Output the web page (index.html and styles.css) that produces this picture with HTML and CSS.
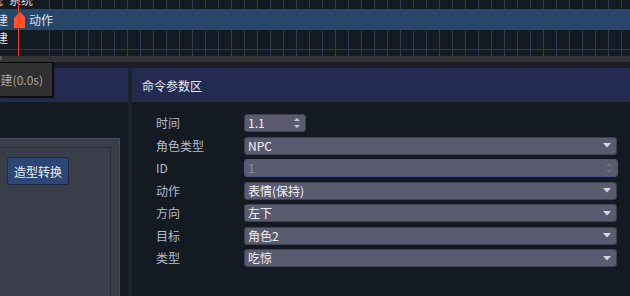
FILE: index.html
```html
<!DOCTYPE html>
<html lang="zh">
<head>
<meta charset="utf-8">
<title>命令参数区</title>
<link rel="stylesheet" href="styles.css">
</head>
<body>
<div class="app">
  <div class="timeline">
    <div class="tl-rows">
      <div class="tl-row r1"><span class="tl-label w3">系统</span><span class="tl-text t1">系统</span></div>
      <div class="tl-row r2 active"><span class="tl-label">创建</span><svg class="marker" width="12" height="16" viewBox="0 0 12 16"><polygon points="0,6 6,0 11,5 11,16 0,16" fill="#ff5526"/></svg><span class="tl-text t2">动作</span></div>
      <div class="tl-row r3"><span class="tl-label">创建</span></div>
      <div class="tl-row r4"></div>
    </div>
    <div class="playhead"></div>
  </div>
  <div class="hscroll"><div class="thumb"></div></div>
  <div class="sep"></div>
  <div class="panels">
    <div class="panel left">
      <div class="panel-header"></div>
      <div class="panel-body">
        <div class="group">
          <div class="group-inner">
            <button class="btn">造型转换</button>
          </div>
        </div>
      </div>
    </div>
    <div class="splitter"></div>
    <div class="panel right">
      <div class="panel-header">命令参数区</div>
      <div class="form">
        <div class="label">时间</div>
        <div class="cell"><div class="field spin"><span class="val">1.1</span><svg class="spin-arrows" width="6" height="10" viewBox="0 0 6 10"><polygon points="0,3 6,3 3,0" /><polygon points="0,7 6,7 3,10" /></svg></div></div>

        <div class="label">角色类型</div>
        <div class="cell"><div class="field combo"><span class="val">NPC</span><svg class="drop" width="8" height="5" viewBox="0 0 8 5"><polygon points="0,0 8,0 4,4.5"/></svg></div></div>

        <div class="label">ID</div>
        <div class="cell"><div class="field combo disabled"><span class="val">1</span><svg class="spin-arrows dim" width="6" height="10" viewBox="0 0 6 10"><polygon points="0,3 6,3 3,0" /><polygon points="0,7 6,7 3,10" /></svg></div></div>

        <div class="label">动作</div>
        <div class="cell"><div class="field combo"><span class="val">表情(保持)</span><svg class="drop" width="8" height="5" viewBox="0 0 8 5"><polygon points="0,0 8,0 4,4.5"/></svg></div></div>

        <div class="label">方向</div>
        <div class="cell"><div class="field combo"><span class="val">左下</span><svg class="drop" width="8" height="5" viewBox="0 0 8 5"><polygon points="0,0 8,0 4,4.5"/></svg></div></div>

        <div class="label">目标</div>
        <div class="cell"><div class="field combo"><span class="val">角色2</span><svg class="drop" width="8" height="5" viewBox="0 0 8 5"><polygon points="0,0 8,0 4,4.5"/></svg></div></div>

        <div class="label">类型</div>
        <div class="cell"><div class="field combo"><span class="val">吃惊</span><svg class="drop" width="8" height="5" viewBox="0 0 8 5"><polygon points="0,0 8,0 4,4.5"/></svg></div></div>
      </div>
    </div>
  </div>
  <div class="tooltip">创建(0.0s)</div>
</div>
</body>
</html>
```
FILE: styles.css
```css
html, body {
  margin: 0;
  padding: 0;
}
body {
  width: 630px;
  height: 296px;
  overflow: hidden;
  background: #141a21;
  font-family: "Noto Sans CJK SC", "Noto Sans", sans-serif;
}
.app {
  position: relative;
  width: 630px;
  height: 296px;
  display: flex;
  flex-direction: column;
}

/* timeline */
.timeline {
  position: relative;
  height: 56px;
  flex: none;
  overflow: hidden;
  background: #131a21;
}
.tl-rows {
  margin-top: -10px;
}
.tl-row {
  box-sizing: border-box;
  display: flex;
  align-items: center;
  height: 20px;
  color: #dfe3ec;
  font-size: 12px;
  line-height: 1;
  white-space: nowrap;
  background-image: repeating-linear-gradient(to right, transparent 0 12px, #2d3a4f 12px 13px);
  background-position: 37px 0;
  background-size: calc(100% - 37px) 100%;
  background-repeat: no-repeat;
}
.tl-row.r1 { height: 19px; }
.tl-row.active {
  height: 21px;
  background-color: #26466a;
  background-image: repeating-linear-gradient(to right, transparent 0 12px, #30425c 12px 13px);
}
.tl-row.r3 {
  height: 20px;
  padding-bottom: 3px;
  border-bottom: 1px solid #2d3a4f;
}
.tl-row.r4 { height: 10px; }
.tl-label {
  flex: none;
  width: 8px;
  overflow: hidden;
  display: flex;
  justify-content: flex-end;
}
.tl-label.w3 { width: 3px; }
.t1 { margin-left: 6px; }
.marker {
  flex: none;
  margin-left: 6px;
  margin-top: 1px;
}
.t2 { margin-left: 3px; }
.playhead {
  position: absolute;
  left: 18px;
  top: 0;
  width: 1px;
  height: 56px;
  background: #ff3a1c;
}

.hscroll {
  height: 6px;
  flex: none;
  background: #333333;
  display: flex;
}
.hscroll .thumb {
  width: 2px;
  height: 4px;
  background: #55565c;
}
.sep {
  height: 6px;
  flex: none;
  background: #1b1f25;
}

/* panels */
.panels {
  flex: 1;
  min-height: 0;
  display: flex;
}
.panel {
  display: flex;
  flex-direction: column;
}
.panel.left {
  width: 128px;
  flex: none;
}
.panel.right {
  flex: 1;
}
.panel-header {
  height: 34px;
  flex: none;
  background: #232b51;
}
.right .panel-header {
  display: flex;
  align-items: center;
  padding-left: 10px;
  color: #e9ecf3;
  font-size: 12px;
}
.left .panel-body {
  flex: 1;
  background: #151b23;
  padding-top: 36px;
  display: flex;
  flex-direction: column;
}
.group {
  box-sizing: border-box;
  width: 120px;
  flex: 1;
  background: #3a3e4a;
  border-top: 1px solid #464a58;
  border-right: 1px solid #464a58;
  padding-top: 8px;
  display: flex;
  flex-direction: column;
}
.group-inner {
  box-sizing: border-box;
  width: 111px;
  flex: 1;
  border-top: 1px solid #2a2d36;
  border-right: 1px solid #2a2d36;
  padding: 9px 0 0 7px;
}
.btn {
  display: block;
  box-sizing: border-box;
  width: 62px;
  height: 28px;
  padding: 0;
  margin: 0;
  background: #2c4775;
  border: 1px solid #1d2740;
  border-radius: 3px;
  color: #eef0f6;
  font-family: inherit;
  font-size: 12px;
}
.splitter {
  width: 4px;
  flex: none;
  background: #1d222b;
}

/* form */
.form {
  flex: 1;
  background: #141a21;
  padding: 12px 13px 0 24px;
  display: grid;
  grid-template-columns: 88px 1fr;
  grid-auto-rows: 18px;
  row-gap: 4.5px;
  align-content: start;
}
.label {
  display: flex;
  align-items: center;
  color: #b1bccd;
  font-size: 12px;
  line-height: 1;
}
.cell {
  display: flex;
}
.field {
  box-sizing: border-box;
  height: 18px;
  flex: 1;
  display: flex;
  align-items: center;
  padding: 0 5px 0 3px;
  background: #5a5b6e;
  border: 1px solid #3f4050;
  border-radius: 3px;
  color: #f2f2f6;
  font-size: 12px;
  line-height: 1;
  white-space: nowrap;
}
.field.spin {
  flex: none;
  width: 62px;
}
.field .val {
  flex: 1;
}
.field.disabled {
  border-color: #4b5189;
  color: #8b8b9b;
  margin-right: -1px;
}
.drop {
  fill: #d6d6de;
}
.spin-arrows {
  fill: #c9c9d2;
}
.spin-arrows.dim {
  fill: #6d6e82;
}

/* tooltip overlay */
.tooltip {
  position: absolute;
  left: 0;
  top: 62px;
  box-sizing: border-box;
  width: 53px;
  height: 35px;
  overflow: hidden;
  display: flex;
  align-items: center;
  justify-content: flex-end;
  padding-right: 9px;
  background: #303030;
  border: 1px solid #0a0a0a;
  border-left: 0;
  color: #a3a3a3;
  font-size: 12px;
  line-height: 1;
  white-space: nowrap;
  box-shadow: 1px 1px 1px rgba(0, 0, 0, 0.6);
}
```
